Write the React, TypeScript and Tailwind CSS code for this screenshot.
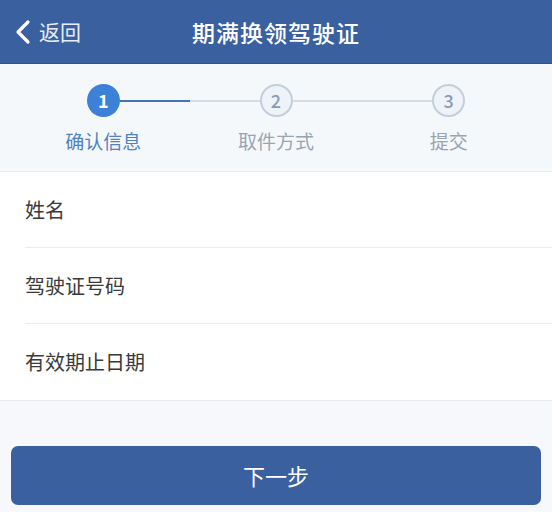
import React from 'react';

const FONT = { fontFamily: '"Noto Sans CJK SC", "Noto Sans", sans-serif' };

const steps = [
  { no: 1, label: '确认信息' },
  { no: 2, label: '取件方式' },
  { no: 3, label: '提交' },
];

const fields = ['姓名', '驾驶证号码', '有效期止日期'];

const App: React.FC = () => {
  const current = 1;

  return (
    <div className="w-[552px] h-[512px] overflow-hidden bg-[#f6f8fb]" style={FONT}>
      {/* Header */}
      <div className="relative h-[64px] bg-[#3a60a0] flex items-center justify-center border-b border-[#2f5190]">
        <div className="absolute left-[14px] top-0 h-full flex items-center text-white">
          <svg width="20" height="26" viewBox="0 0 20 26" fill="none">
            <path d="M14 3 L4 13 L14 23" stroke="white" strokeWidth="3.2" strokeLinecap="round" strokeLinejoin="round" />
          </svg>
          <span className="ml-[5px] text-[21px] leading-none text-[#e6edf7]">返回</span>
        </div>
        <h1 className="text-white text-[23px] font-medium tracking-[1px] mt-[2px]">期满换领驾驶证</h1>
      </div>

      {/* Steps */}
      <div className="bg-[#f5f8fb] px-[17px] pt-[20px] h-[108px] border-b border-[#e8ecf1]">
        <div className="grid grid-cols-3">
          {steps.map((s, i) => {
            const done = s.no <= current;
            const leftColor = i === 0 ? 'bg-transparent' : 'bg-[#d3dbe5]';
            const rightColor = i === steps.length - 1 ? 'bg-transparent' : s.no === current ? 'bg-[#4474b4]' : 'bg-[#d3dbe5]';
            return (
              <div key={s.no} className="flex flex-col items-center">
                <div className="flex items-center w-full">
                  <div className={`flex-1 h-[2px] ${leftColor}`} />
                  {done ? (
                    <div className="w-[33px] h-[33px] rounded-full bg-[#3d80d8] text-white flex items-center justify-center text-[18px] font-semibold">
                      {s.no}
                    </div>
                  ) : (
                    <div className="w-[33px] h-[33px] rounded-full bg-[#eef3f9] border-2 border-[#c3cedb] text-[#8b9ab0] flex items-center justify-center text-[18px] font-medium">
                      {s.no}
                    </div>
                  )}
                  <div className={`flex-1 h-[2px] ${rightColor}`} />
                </div>
                <span className={`mt-[14px] text-[19px] leading-none ${done ? 'text-[#4f82c4]' : 'text-[#9aa4b0]'}`}>
                  {s.label}
                </span>
              </div>
            );
          })}
        </div>
      </div>

      {/* Form */}
      <div className="bg-white border-b border-[#e6e9ee]">
        {fields.map((f, i) => (
          <div key={f} className="pl-[25px]">
            <div className={`h-[76px] flex items-center text-[20px] text-[#3a3a3a] ${i < fields.length - 1 ? 'border-b border-[#e9ecf0]' : ''}`}>
              {f}
            </div>
          </div>
        ))}
      </div>

      {/* Button */}
      <div className="px-[11px] pt-[45px]">
        <button className="w-full h-[59px] rounded-[7px] bg-[#3a60a0] text-white text-[22px] flex items-center justify-center">
          下一步
        </button>
      </div>
    </div>
  );
};

export default App;
